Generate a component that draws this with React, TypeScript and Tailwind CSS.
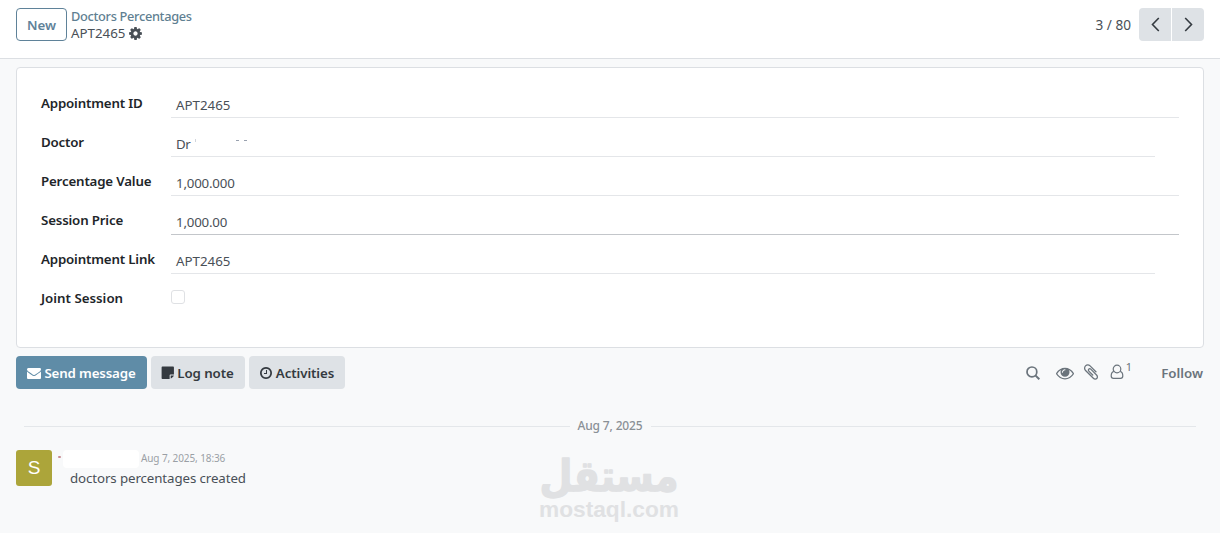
import { ReactNode } from "react";

const ICONS = {
  cog: "M1152 896q0-106-75-181t-181-75-181 75-75 181 75 181 181 75 181-75 75-181zm512-109v222q0 12-8 23t-20 13l-185 28q-19 54-39 91 35 50 107 138 10 12 10 25t-9 23q-27 37-99 108t-94 71q-12 0-26-9l-138-108q-44 23-91 38-16 136-29 186-7 28-36 28h-222q-14 0-24.5-8.5t-11.5-21.5l-28-184q-49-16-90-37l-141 107q-10 9-25 9-14 0-25-11-126-114-165-168-7-10-7-23 0-12 8-23 15-21 51-66.5t54-70.5q-27-50-41-99l-183-27q-13-2-21-12.5t-8-23.5v-222q0-12 8-23t19-13l186-28q14-46 39-92-40-57-107-138-10-12-10-24 0-10 9-23 26-36 98.5-107.5t94.5-71.5q13 0 26 10l138 107q44-23 91-38 16-136 29-186 7-28 36-28h222q14 0 24.5 8.5t11.5 21.5l28 184q49 16 90 37l142-107q9-9 24-9 13 0 25 10 129 119 165 170 7 8 7 22 0 12-8 23-15 21-51 66.5t-54 70.5q26 50 41 98l183 28q13 2 21 12.5t8 23.5z",
  envelope:
    "M1792 710v794q0 66-47 113t-113 47h-1472q-66 0-113-47t-47-113v-794q44 49 101 87 362 246 497 345 57 42 92.5 65.5t94.5 48 110 24.5h2q51 0 110-24.5t94.5-48 92.5-65.5q170-123 498-345 57-39 100-87zm0-294q0 79-49 151t-122 123q-376 261-468 325-10 7-42.5 31t-54 38.5-52 32.5-57.5 27-50 9h-2q-23 0-50-9t-57.5-27-52-32.5-54-38.5-42.5-31q-91-64-262-182.5t-205-142.5q-62-42-117-115.5t-55-136.5q0-78 41.5-130t118.5-52h1472q65 0 112.5 47t47.5 113z",
  note: "M1152 1216v448h-864q-96 0-96-96v-1280q0-96 96-96h1280q96 0 96 96v832h-416q-96 0-96 96zm128 32h376q-10 70-60 120l-196 196q-50 50-120 60z",
  clock:
    "M1024 544v448q0 14-9 23t-23 9h-320q-14 0-23-9t-9-23v-64q0-14 9-23t23-9h224v-352q0-14 9-23t23-9h64q14 0 23 9t9 23zm416 352q0-148-73-273t-198-198-273-73-273 73-198 198-73 273 73 273 198 198 273 73 273-73 198-198 73-273zm224 0q0 209-103 385.5t-279.5 279.5-385.5 103-385.5-103-279.5-279.5-103-385.5 103-385.5 279.5-279.5 385.5-103 385.5 103 279.5 279.5 103 385.5z",
  eye: "M1664 960q-152-236-381-353 61 104 61 225 0 185-131.5 316.5t-316.5 131.5-316.5-131.5-131.5-316.5q0-121 61-225-229 117-381 353 133 205 333.5 326.5t434.5 121.5 434.5-121.5 333.5-326.5zm-720-384q0-20-14-34t-34-14q-125 0-214.5 89.5t-89.5 214.5q0 20 14 34t34 14 34-14 14-34q0-86 61-147t147-61q20 0 34-14t14-34zm848 384q0 34-20 69-140 230-376.5 368.5t-499.5 138.5-499.5-139-376.5-368q-20-35-20-69t20-69q140-229 376.5-368t499.5-139 499.5 139 376.5 368q20 35 20 69z",
  paperclip:
    "M1596 1385q0 117-79 196t-196 79q-135 0-235-100l-777-776q-113-115-113-271 0-159 110-270t269-111q158 0 273 113l605 606q10 10 10 22 0 16-30.5 46.5t-46.5 30.5q-13 0-23-10l-606-607q-79-77-181-77-106 0-179 75t-73 181q0 105 76 181l776 777q63 63 145 63 64 0 106-42t42-106q0-82-63-145l-581-581q-26-24-60-24-29 0-48 19t-19 48q0 32 25 59l410 410q10 10 10 22 0 16-31 47t-47 31q-12 0-22-10l-410-410q-63-61-63-149 0-82 57-139t139-57q88 0 149 63l581 581q100 98 100 235z",
};

function Icon({ name, className }: { name: keyof typeof ICONS; className: string }) {
  return (
    <svg viewBox="0 0 1792 1792" fill="currentColor" className={`shrink-0 ${className}`}>
      <path d={ICONS[name]} />
    </svg>
  );
}

function Field({ label, line, children }: { label: string; line: string; children: ReactNode }) {
  return (
    <div className="flex h-[39px]">
      <div className="w-[130px] text-[13.3px] leading-5 font-semibold tracking-[-0.17px] whitespace-nowrap text-[#212529]">
        {label}
      </div>
      <div className={`h-[25px] border-b pt-[2px] pl-[5px] text-[13.3px] leading-5 ${line}`}>
        {children}
      </div>
    </div>
  );
}

const fullLine = "w-[1008px] border-[#e4e6e9]";
const shortLine = "w-[984px] border-[#e4e6e9]";

function ControlPanel() {
  return (
    <header className="flex h-[59px] items-start border-b border-[#dcdfe3] bg-white px-4 pt-2">
      <button className="h-[33px] w-[51px] rounded border border-[#5f8299] pt-[2px] text-[13.3px] font-semibold text-[#5f8299]">
        New
      </button>
      <div className="ml-1 flex flex-col text-[13.3px] leading-[17px]">
        <a className="text-[12.8px] font-medium tracking-[-0.32px] text-[#5f7f92]">Doctors Percentages</a>
        <div className="flex items-center gap-[3px]">
          <span>APT2465</span>
          <Icon name="cog" className="size-[15px]" />
        </div>
      </div>
      <div className="ml-auto flex h-[33px] items-center">
        <span className="mr-2 pt-px text-[13.6px]">3 / 80</span>
        <div className="flex gap-px text-[#343a40]">
          <button className="flex h-[33px] w-8 items-center justify-center rounded-l bg-[#dee2e6]">
            <svg width="9" height="15" viewBox="0 0 9 15" fill="none" stroke="currentColor" strokeWidth="1.6">
              <path d="M7.8 1 1.5 7.5l6.3 6.5" />
            </svg>
          </button>
          <button className="flex h-[33px] w-8 items-center justify-center rounded-r bg-[#dee2e6]">
            <svg width="9" height="15" viewBox="0 0 9 15" fill="none" stroke="currentColor" strokeWidth="1.6">
              <path d="m1.2 1 6.3 6.5L1.2 14" />
            </svg>
          </button>
        </div>
      </div>
    </header>
  );
}

function FormSheet() {
  return (
    <section className="mx-4 mt-2 h-[281px] rounded border border-[#dcdfe3] bg-white pt-[25px] pl-6">
      <Field label="Appointment ID" line={fullLine}>APT2465</Field>
      <Field label="Doctor" line={shortLine}>
        <div className="flex">
          <span className="tracking-[-0.4px]">Dr</span>
          <span className="mt-[5px] ml-[5px] h-[3px] w-px bg-gray-300" />
          <span className="mt-[6px] ml-10 h-px w-[3px] bg-gray-400" />
          <span className="mt-[6px] ml-[5px] h-px w-[3px] bg-gray-400" />
        </div>
      </Field>
      <Field label="Percentage Value" line={fullLine}>
        <span className="tracking-[-0.2px]">1,000.000</span>
      </Field>
      <Field label="Session Price" line="w-[1008px] border-[#c3c6ca]">
        <span className="tracking-[-0.2px]">1,000.00</span>
      </Field>
      <Field label="Appointment Link" line={shortLine}>APT2465</Field>
      <div className="flex">
        <div className="w-[130px] text-[13.3px] leading-5 font-semibold text-[#212529]">Joint Session</div>
        <span className="mt-[2px] size-[14px] rounded-[3px] border border-[#dfe1e4]" />
      </div>
    </section>
  );
}

function ChatterTopbar() {
  return (
    <div className="mx-4 mt-2 flex h-[33px] items-center text-[13.3px] font-semibold">
      <button className="flex h-full w-[131px] items-center justify-center gap-[3px] rounded bg-[#5f8ca7] text-white">
        <Icon name="envelope" className="size-[14px]" />
        <span className="pt-[2px] tracking-[-0.15px]">Send message</span>
      </button>
      <button className="ml-1 flex h-full w-[94px] items-center justify-center gap-[2px] rounded bg-[#dee2e6] pr-[2px] text-[#343a40]">
        <Icon name="note" className="size-[15px]" />
        <span className="pt-[2px] tracking-[-0.1px]">Log note</span>
      </button>
      <button className="ml-1 flex h-full w-24 items-center justify-center gap-[3px] rounded bg-[#dee2e6] pr-px text-[#343a40]">
        <Icon name="clock" className="size-[14px]" />
        <span className="pt-[2px] tracking-[-0.1px]">Activities</span>
      </button>
      <div className="ml-auto flex items-center pr-px text-[#6b747c]">
        <svg width="14" height="14" viewBox="0 0 14 14" fill="none" stroke="currentColor" strokeWidth="1.7">
          <circle cx="5.9" cy="5.9" r="4.9" />
          <path d="m9.4 9.4 3.9 3.9" strokeWidth="2" />
        </svg>
        <Icon name="eye" className="ml-4 size-[18px]" />
        <Icon name="paperclip" className="mb-[2px] ml-2 size-[18px]" />
        <svg width="14" height="16" viewBox="0 0 14 16" fill="none" stroke="currentColor" strokeWidth="1.2" className="mb-px ml-[10px]">
          <circle cx="7" cy="5" r="3.8" />
          <path d="M3.8 7.4C2 7.9 1.2 10 1.2 12c0 1.6 1 2.4 2.3 2.4h7c1.3 0 2.3-.8 2.3-2.4 0-2-.8-4.1-2.6-4.6" />
        </svg>
        <sup className="ml-[2px] text-[11px] font-normal">1</sup>
        <span className="ml-[29px] pt-[2px]">Follow</span>
      </div>
    </div>
  );
}

function Watermark() {
  return (
    <div className="absolute top-[451px] left-[539px] w-[141px] text-[#e0e1e3]">
      <svg width="141" height="76" viewBox="0 0 141 76" fill="currentColor" className="overflow-visible">
        <text
          x="70"
          y="40"
          textAnchor="middle"
          direction="rtl"
          textLength="139"
          lengthAdjust="spacingAndGlyphs"
          stroke="currentColor"
          strokeWidth="1.4"
          strokeLinejoin="round"
          className="font-['DejaVu_Sans',sans-serif] text-[43px] font-bold"
        >
          مستقل
        </text>
        <text
          x="0"
          y="66"
          textLength="140"
          lengthAdjust="spacingAndGlyphs"
          className="font-['Liberation_Sans',sans-serif] text-[21.5px] font-bold"
        >
          mostaql.com
        </text>
      </svg>
    </div>
  );
}

export default function App() {
  return (
    <div className="relative h-[533px] w-[1220px] overflow-hidden bg-[#f8f9fa] font-['Noto_Sans',sans-serif] text-[#495057]">
      <ControlPanel />
      <FormSheet />
      <ChatterTopbar />
      <div className="mx-6 mt-[27px] flex h-5 items-center gap-2 text-xs font-medium text-[#8a9096]">
        <span className="h-px flex-1 bg-[#e4e7ea]" />
        <span className="tracking-[-0.15px]">Aug 7, 2025</span>
        <span className="h-px flex-1 bg-[#e4e7ea]" />
      </div>
      <div className="mt-[14px] ml-4 flex">
        <div className="flex size-9 items-center justify-center rounded-[3px] bg-[#aca53a] font-['Liberation_Sans',sans-serif] text-[19px] text-white">
          S
        </div>
        <div className="ml-[6px]">
          <div className="flex h-[17px] items-center">
            <span className="mb-1 h-[2px] w-[3px] rounded-full bg-[#c98b90]" />
            <span className="ml-[2px] h-[18px] w-[76px] rounded bg-white" />
            <span className="ml-[2px] text-[10px] tracking-[-0.1px] text-[#9a9fa5]">Aug 7, 2025, 18:36</span>
          </div>
          <p className="ml-3 text-[13.3px] leading-[22px] tracking-[-0.1px]">doctors percentages created</p>
        </div>
      </div>
      <Watermark />
    </div>
  );
}
